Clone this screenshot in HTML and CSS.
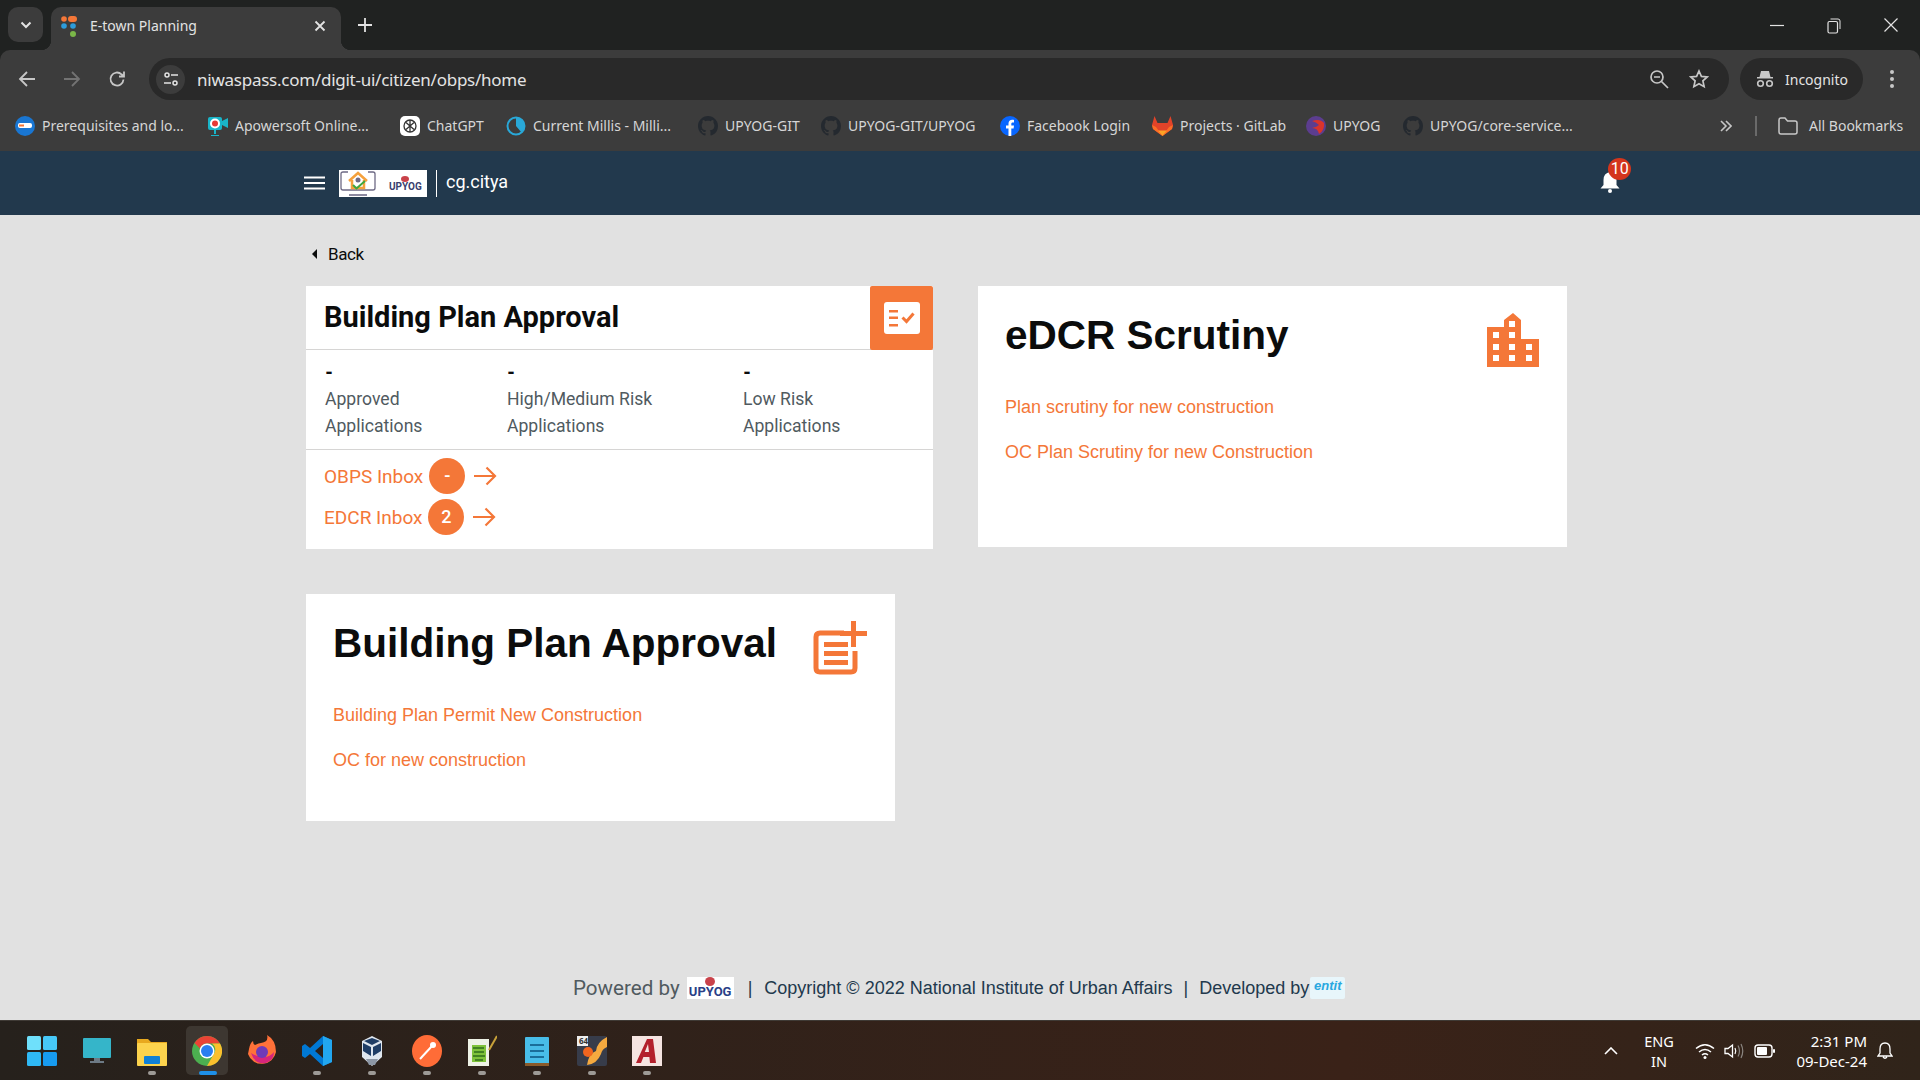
FILE: index.html
```html
<!DOCTYPE html>
<html lang="en">
<head>
    <meta charset="UTF-8">
    <title>E-town Planning</title>
    <link rel="stylesheet" href="styles.css">
</head>
<body>
    <svg class="defs" width="0" height="0">
        <symbol id="github" viewBox="0 0 16 16"><path fill="#24292f" d="M8 0C3.58 0 0 3.58 0 8c0 3.54 2.29 6.53 5.47 7.59.4.07.55-.17.55-.38 0-.19-.01-.82-.01-1.49-2.01.37-2.53-.49-2.69-.94-.09-.23-.48-.94-.82-1.13-.28-.15-.68-.52-.01-.53.63-.01 1.08.58 1.23.82.72 1.21 1.87.87 2.33.66.07-.52.28-.87.51-1.07-1.78-.2-3.64-.89-3.64-3.95 0-.87.31-1.59.82-2.15-.08-.2-.36-1.02.08-2.12 0 0 .67-.21 2.2.82.64-.18 1.32-.27 2-.27.68 0 1.36.09 2 .27 1.53-1.04 2.2-.82 2.2-.82.44 1.1.16 1.92.08 2.12.51.56.82 1.27.82 2.15 0 3.07-1.87 3.75-3.65 3.95.29.25.54.73.54 1.48 0 1.07-.01 1.93-.01 2.2 0 .21.15.46.55.38A8.013 8.013 0 0016 8c0-4.42-3.58-8-8-8z"/></symbol>
        <symbol id="arrow" viewBox="0 0 24 20"><path fill="none" stroke="#f47738" stroke-width="2.2" d="M1 10h21M13.5 1.5 22 10l-8.500 8.500"/></symbol>
    </svg>

    <!-- browser window -->
    <div class="tabstrip">
        <div class="tabsearch"><svg width="14" height="14" viewBox="0 0 14 14"><path fill="none" stroke="#e3e3e3" stroke-width="2" d="M2.500 4.500 7 9l4.500-4.500"/></svg></div>
        <div class="tab">
            <svg class="favicon" width="18" height="24" viewBox="0 0 18 24">
                <circle cx="3" cy="5" r="2.800" fill="#f47738"/><rect x="7" y="2" width="9" height="6" rx="3" fill="#f47738"/>
                <circle cx="3" cy="12" r="2.800" fill="#2d9cdb"/><circle cx="12" cy="12" r="2.800" fill="#2d9cdb"/>
                <circle cx="12" cy="20" r="3" fill="#7ab648"/>
            </svg>
            <span class="tab-title">E-town Planning</span>
            <svg width="12" height="12" viewBox="0 0 12 12"><path stroke="#e3e3e3" stroke-width="1.800" d="M1.500 1.500l9 9M10.500 1.500l-9 9"/></svg>
        </div>
        <svg class="newtab" width="14" height="14" viewBox="0 0 14 14"><path stroke="#e3e3e3" stroke-width="1.800" d="M7 0v14M0 7h14"/></svg>
        <div class="winctrls">
            <svg width="14" height="14" viewBox="0 0 14 14"><path stroke="#e3e3e3" stroke-width="1.200" d="M0 7.500h14"/></svg>
            <svg width="14" height="16" viewBox="0 0 14 16"><rect x="1" y="3.500" width="9.500" height="11.500" rx="1.500" fill="none" stroke="#e3e3e3" stroke-width="1.200"/><path fill="none" stroke="#e3e3e3" d="M3.500 1h7.500q2 0 2 2v8"/></svg>
            <svg width="14" height="14" viewBox="0 0 14 14"><path stroke="#e3e3e3" stroke-width="1.200" d="M.500.500l13 13M13.500.500l-13 13"/></svg>
        </div>
    </div>

    <div class="toolbar">
        <div class="navbtns">
            <svg width="18" height="18" viewBox="0 0 18 18"><path fill="none" stroke="#c7c7c7" stroke-width="1.800" d="M17 9H2M9 2 2 9l7 7"/></svg>
            <svg width="18" height="18" viewBox="0 0 18 18"><path fill="none" stroke="#737373" stroke-width="1.800" d="M1 9h15M9 2l7 7-7 7"/></svg>
            <svg width="18" height="18" viewBox="0 0 18 18"><path fill="none" stroke="#c7c7c7" stroke-width="1.800" d="M15.500 9.500A6.500 6.500 0 1 1 13.500 4.300L16 6.500M16 1.500v5h-5"/></svg>
        </div>
        <div class="omnibox">
            <div class="siteinfo"><svg width="16" height="16" viewBox="0 0 16 16"><g fill="none" stroke="#e3e3e3" stroke-width="1.500"><circle cx="4" cy="4" r="2"/><path d="M8 4h7M1 12h7"/><circle cx="12" cy="12" r="2"/></g></svg></div>
            <span class="url">niwaspass.com/digit-ui/citizen/obps/home</span>
            <svg width="20" height="20" viewBox="0 0 20 20"><g fill="none" stroke="#c7c7c7" stroke-width="1.700"><circle cx="8" cy="8" r="6"/><path d="M5 8h6M12.500 12.500 19 19"/></g></svg>
            <svg class="star" width="20" height="20" viewBox="0 0 20 20"><path fill="none" stroke="#c7c7c7" stroke-width="1.700" d="M10 2l2.400 5.400 5.800.6-4.300 3.900 1.200 5.800L10 14.800l-5.100 2.900 1.200-5.800L1.800 8l5.800-.6z"/></svg>
        </div>
        <div class="incognito">
            <svg width="18" height="18" viewBox="0 0 18 18"><path fill="#c7c7c7" d="M5 1h8l1.500 6H17v1.500H1V7h2.500z"/><g fill="none" stroke="#c7c7c7" stroke-width="1.600"><circle cx="4.500" cy="13.500" r="2.800"/><circle cx="13.500" cy="13.500" r="2.800"/></g></svg>
            <span>Incognito</span>
        </div>
        <svg class="menu" width="4" height="18" viewBox="0 0 4 18"><g fill="#c7c7c7"><circle cx="2" cy="2" r="2"/><circle cx="2" cy="9" r="2"/><circle cx="2" cy="16" r="2"/></g></svg>
    </div>

    <div class="bookmarks">
        <div class="bookmark"><svg width="20" height="20" viewBox="0 0 20 20"><circle cx="10" cy="10" r="10" fill="#1976d2"/><rect x="3" y="7" width="14" height="5" rx="2" fill="#fff"/><rect x="4" y="8.500" width="5" height="2" fill="#f47738"/></svg><span>Prerequisites and lo...</span></div>
        <div class="bookmark"><svg width="20" height="22" viewBox="0 0 20 22"><rect x="0" y="2" width="14" height="13" rx="2" fill="#19b5c9"/><path fill="#19b5c9" d="M14 6l6-3v10l-6-3zM6 15h2v4H6zM3 20h8v1H3z"/><circle cx="7" cy="8.500" r="5" fill="#fff"/><circle cx="7" cy="8.500" r="3" fill="#e53935"/></svg><span>Apowersoft Online...</span></div>
        <div class="bookmark"><svg width="20" height="20" viewBox="0 0 20 20"><rect width="20" height="20" rx="5" fill="#fff"/><g fill="none" stroke="#333" stroke-width="1.300"><circle cx="10" cy="10" r="6"/><path d="M6 6.500l8 7M14 6.500l-8 7M10 4v12"/></g></svg><span>ChatGPT</span></div>
        <div class="bookmark"><svg width="20" height="20" viewBox="0 0 20 20"><circle cx="10" cy="10" r="8.500" fill="none" stroke="#29a8d8" stroke-width="2"/><path fill="#29a8d8" d="M10 1.500A8.500 8.500 0 0 1 15.500 16.500L10 10z"/></svg><span>Current Millis - Milli...</span></div>
        <div class="bookmark"><svg width="20" height="20"><use href="#github"/></svg><span>UPYOG-GIT</span></div>
        <div class="bookmark"><svg width="20" height="20"><use href="#github"/></svg><span>UPYOG-GIT/UPYOG</span></div>
        <div class="bookmark"><svg width="20" height="20" viewBox="0 0 20 20"><circle cx="10" cy="10" r="10" fill="#0866ff"/><path fill="#fff" d="M8.500 20v-7.500H6V9.500h2.500V7.500C8.500 5 10 3.700 12.200 3.700c1 0 1.800.2 1.800.2v2.500h-1.200c-1.200 0-1.500.7-1.500 1.500v1.600h2.700l-.4 3h-2.300V20z"/></svg><span>Facebook Login</span></div>
        <div class="bookmark"><svg width="21" height="20" viewBox="0 0 21 20"><path fill="#e24329" d="M10.500 20 1 13 0 9 2.500 0l3 7h10l3-7L21 9l-1 4z"/><path fill="#fc6d26" d="M10.500 20 4 11l-4-2 1 4zM10.500 20 17 11l4-2-1 4z"/><path fill="#fca326" d="M10.500 20 6 14.500h9z"/></svg><span>Projects · GitLab</span></div>
        <div class="bookmark"><svg width="20" height="20" viewBox="0 0 20 20"><circle cx="10" cy="10" r="10" fill="#5c3d8f"/><path fill="#d9342b" d="M6 5q8-3 12 2 1 7-5 11-1-6-7-6 5-1 7-3-3-3-7-4z"/></svg><span>UPYOG</span></div>
        <div class="bookmark"><svg width="20" height="20"><use href="#github"/></svg><span>UPYOG/core-service...</span></div>
        <svg class="more" width="12" height="12" viewBox="0 0 12 12"><path fill="none" stroke="#c7c7c7" stroke-width="1.600" d="M1 1l5 5-5 5M6 1l5 5-5 5"/></svg>
        <div class="bm-sep"></div>
        <div class="bookmark allbm"><svg width="20" height="18" viewBox="0 0 20 18"><path fill="none" stroke="#c7c7c7" stroke-width="1.500" d="M1 3q0-2 2-2h4l2.500 3H17q2 0 2 2v9q0 2-2 2H3q-2 0-2-2z"/></svg><span>All Bookmarks</span></div>
    </div>

    <!-- site header -->
    <header class="topbar">
        <svg class="hamburger" width="21" height="14" viewBox="0 0 21 14"><path stroke="#fff" stroke-width="2.200" d="M0 1.500h21M0 7h21M0 12.500h21"/></svg>
        <div class="logo">
            <svg width="36" height="27" viewBox="0 0 36 27">
                <path fill="none" stroke="#6e6a85" stroke-width="1.300" d="M8 2H3Q1 2 1 4v14q0 2 2 2h30q2 0 2-2V4q0-2-2-2h-5"/>
                <path fill="none" stroke="#f5a13c" stroke-width="2.500" d="M9 11l9-8 9 8M12 10v8h12v-8"/>
                <circle cx="18" cy="10" r="2.500" fill="#6e6a85"/>
                <path fill="none" stroke="#3fa63f" stroke-width="2" d="M13 15l3.500 3.500L25 11"/>
                <rect x="9" y="24" width="18" height="2" fill="#8d8aa0"/>
            </svg>
            <div class="logo-upyog">
                <i class="logo-dot"></i>
                <span>UPYOG</span>
            </div>
        </div>
        <span class="city">cg.citya</span>
        <div class="notif">
            <svg width="20" height="21" viewBox="0 0 20 21"><path fill="#fff" d="M10 0q6.500 1 6.500 8v5l3 3.500H.5l3-3.500V8Q3.500 1 10 0z"/><circle cx="10" cy="19" r="2" fill="#fff"/></svg>
            <span class="badge">10</span>
        </div>
    </header>

    <main class="page">
        <div class="back"><i class="caret"></i><span>Back</span></div>

        <div class="cards">
            <section class="card card-inbox">
                <div class="inbox-head">
                    <h2>Building Plan Approval</h2>
                    <div class="head-icon">
                        <svg width="36" height="32" viewBox="0 0 36 32">
                            <rect width="36" height="32" rx="3" fill="#fff"/>
                            <path fill="#f47738" d="M5 8h9v2.500H5zM5 14.500h9v2.500H5zM5 22h9v2.500H5z"/>
                            <path fill="none" stroke="#f47738" stroke-width="3" d="M18.500 15.500l4 4 7-8"/>
                        </svg>
                    </div>
                </div>
                <div class="stats">
                    <div class="stat"><b>-</b><p>Approved<br>Applications</p></div>
                    <div class="stat"><b>-</b><p>High/Medium Risk<br>Applications</p></div>
                    <div class="stat"><b>-</b><p>Low Risk<br>Applications</p></div>
                </div>
                <div class="inbox-links">
                    <div class="inbox-link"><a>OBPS Inbox</a><span class="count">-</span><svg width="24" height="20"><use href="#arrow"/></svg></div>
                    <div class="inbox-link"><a>EDCR Inbox</a><span class="count">2</span><svg width="24" height="20"><use href="#arrow"/></svg></div>
                </div>
            </section>

            <section class="card card-link">
                <div class="link-head">
                    <h1>eDCR Scrutiny</h1>
                    <svg width="52" height="54" viewBox="0 0 52 54">
                        <path fill="#f47738" d="M0 14h17V7l9-7 8 7v19h18v28H0z"/>
                        <g fill="#fff">
                            <rect x="22" y="8" width="6" height="6"/>
                            <rect x="6" y="19" width="6" height="6"/><rect x="22" y="19" width="6" height="6"/>
                            <rect x="6" y="31" width="6" height="6"/><rect x="22" y="31" width="6" height="6"/><rect x="39" y="31" width="6" height="6"/>
                            <rect x="6" y="42" width="6" height="6"/><rect x="22" y="42" width="6" height="6"/><rect x="39" y="42" width="6" height="6"/>
                        </g>
                    </svg>
                </div>
                <a class="card-a first">Plan scrutiny for new construction</a>
                <a class="card-a">OC Plan Scrutiny for new Construction</a>
            </section>

            <section class="card card-link card-short">
                <div class="link-head">
                    <h1>Building Plan Approval</h1>
                    <svg width="54" height="54" viewBox="0 0 54 54">
                        <path fill="none" stroke="#f47738" stroke-width="5" d="M31 12H7q-4 0-4 4v31q0 4 4 4h31q4 0 4-4V30"/>
                        <path fill="#f47738" d="M11 21h24v5H11zM11 30h24v5H11zM11 39h24v5H11zM38 0h5v10h11v5H43v11h-5V15H27v-5h11z"/>
                    </svg>
                </div>
                <a class="card-a first">Building Plan Permit New Construction</a>
                <a class="card-a">OC for new construction</a>
            </section>
        </div>

        <footer class="footer">
            <span class="powered">Powered by</span>
            <div class="foot-upyog"><i class="logo-dot"></i><span>UPYOG</span></div>
            <span class="foot-bar foot-bar-first">|</span>
            <span>Copyright © 2022 National Institute of Urban Affairs</span>
            <span class="foot-bar">|</span>
            <span>Developed by</span>
            <div class="foot-entit"><span>entit</span></div>
        </footer>
    </main>

    <!-- windows taskbar -->
    <div class="taskbar">
        <div class="apps">
            <div class="app"><svg width="30" height="30" viewBox="0 0 30 30"><g fill="#2fb9f5"><rect width="14" height="14" rx="1.500" fill="#6fe0fb"/><rect x="16" width="14" height="14" rx="1.500" fill="#47c9f8"/><rect y="16" width="14" height="14" rx="1.500" fill="#2fb9f5"/><rect x="16" y="16" width="14" height="14" rx="1.500" fill="#179bf0"/></g></svg></div>
            <div class="app"><svg width="30" height="30" viewBox="0 0 30 30"><rect x="1" y="2" width="28" height="20" rx="1" fill="#35b5c9"/><path fill="#6d7a85" d="M12 22h6v3h-6zM8 25h14v2H8z"/></svg></div>
            <div class="app run"><svg width="30" height="30" viewBox="0 0 30 30"><path fill="#e8a91f" d="M0 3h11l3 3h16v5H0z"/><rect y="7" width="30" height="23" rx="1" fill="#fcd34d"/><rect x="7" y="20" width="16" height="8" rx="1" fill="#0f80d6"/></svg></div>
            <div class="app active"><svg width="30" height="30" viewBox="0 0 30 30"><circle cx="15" cy="15" r="15" fill="#4caf50"/><path fill="#ea4335" d="M15 0a15 15 0 0 1 13 7.500H15a7.500 7.500 0 0 0-7 5L2.500 7A15 15 0 0 1 15 0z"/><path fill="#fbc02d" d="M28 7.500A15 15 0 0 1 15 30l6.500-11.500A7.500 7.500 0 0 0 20 7.500z"/><circle cx="15" cy="15" r="7.500" fill="#fff"/><circle cx="15" cy="15" r="6" fill="#2a7ef0"/></svg></div>
            <div class="app"><svg width="30" height="32" viewBox="0 0 30 32"><path fill="#ff7139" d="M2 14Q3 8 6 6q0 3 2 4 4-2 6-2 8-1 6-8 9 5 9 17a14.500 14.500 0 0 1-28 2z"/><path fill="#d6257d" d="M4 18q4 12 15 10 8-3 8-11-4 5-10 5-7 0-13-4z"/><circle cx="15" cy="17" r="6" fill="#6f3ab8"/></svg></div>
            <div class="app run"><svg width="30" height="30" viewBox="0 0 30 30"><path fill="#0078d4" d="M21 0l9 4v22l-9 4L8 18l-5 4-3-2v-10l3-2 5 4zM21 8l-8 7 8 7z"/><path fill="#22a7f0" d="M21 0l9 4v22l-9 4z"/></svg></div>
            <div class="app run"><svg width="30" height="32" viewBox="0 0 30 32"><path fill="#dfe6ef" d="M5 6 15 1l10 5v16l-10 9-10-9z"/><path fill="#1f3d66" d="M7 6l8-3 8 3-8 4zM6 8l8 4v9l-8-5zM16 12l8-4v8l-8 5z"/><path fill="#8d97a5" d="M9 24h12l-3 6h-6z"/></svg></div>
            <div class="app run"><svg width="30" height="32" viewBox="0 0 30 32"><ellipse cx="15" cy="16" rx="15" ry="16" fill="#ff6c37"/><path fill="none" stroke="#fff" stroke-width="2" d="M8 24 20 11"/><circle cx="21" cy="10" r="3" fill="#fff"/></svg></div>
            <div class="app run"><svg width="30" height="32" viewBox="0 0 30 32"><path fill="#eef2e6" d="M1 4h21v27H1z"/><rect x="5" y="10" width="14" height="17" fill="#7ec23a"/><path stroke="#2f6d1b" stroke-width="1.500" d="M6 13h11M7 17h10M6 21h12M8 25h8"/><path stroke="#c8a13a" stroke-width="2" d="M22 15 30 1"/></svg></div>
            <div class="app run"><svg width="30" height="32" viewBox="0 0 30 32"><rect x="3" y="2" width="24" height="29" rx="1" fill="#48bde8"/><rect x="3" y="28" width="24" height="3" fill="#8a5a2b"/><path stroke="#1a6e99" stroke-width="2" d="M8 10h14M8 16h14M8 22h14"/></svg></div>
            <div class="app run"><svg width="30" height="32" viewBox="0 0 30 32"><rect y="1" width="30" height="30" rx="2" fill="#373c4a"/><path fill="#f5a93f" d="M10 30q2-12 9-14 1-9 11-14v10q-5 2-6 7-4 10-14 11z"/><circle cx="11" cy="17" r="5" fill="#f0651f"/><rect y="1" width="11" height="10" fill="#eee"/><text class="app64" x="2" y="9">64</text></svg></div>
            <div class="app run"><svg width="30" height="30" viewBox="0 0 30 30"><rect width="30" height="30" fill="#f5e4e1"/><path fill="#b3202c" d="M15 3h6l3 24h-6l-.6-6h-6L9 27H4zM12.800 16h4.200L16 8z"/></svg></div>
        </div>
        <div class="tray">
            <svg class="tray-up" width="14" height="8" viewBox="0 0 14 8"><path fill="none" stroke="#fff" stroke-width="1.600" d="M1 7l6-6 6 6"/></svg>
            <div class="lang"><span>ENG</span><span>IN</span></div>
            <svg class="wifi" width="20" height="16" viewBox="0 0 20 16"><g fill="none" stroke="#fff" stroke-width="1.500"><path d="M1 5.500q9-7.500 18 0M4 9q6-5 12 0M7 12q3-2.500 6 0"/></g><circle cx="10" cy="14.500" r="1.500" fill="#fff"/></svg>
            <svg class="volume" width="20" height="16" viewBox="0 0 20 16"><path fill="none" stroke="#fff" stroke-width="1.300" d="M1 5.500h3L8.500 2v12L4 10.500H1z"/><path fill="none" stroke="#fff" stroke-width="1.200" d="M11 5q1.500 3 0 6"/><path fill="none" stroke="#8a8580" stroke-width="1.200" d="M14 2.500q3 5.500 0 11M17 1q3.500 7 0 14"/></svg>
            <svg class="battery" width="21" height="14" viewBox="0 0 21 14"><rect x="1" y="1" width="17" height="12" rx="3" fill="none" stroke="#fff" stroke-width="1.400"/><rect x="3" y="3" width="10" height="8" rx="1" fill="#fff"/><rect x="19" y="5" width="2" height="4" rx="1" fill="#fff"/></svg>
            <div class="clock"><span>2:31 PM</span><span>09-Dec-24</span></div>
            <svg class="tray-bell" width="16" height="18" viewBox="0 0 16 18"><path fill="none" stroke="#fff" stroke-width="1.300" d="M8 1q5 0 5 6v4l2 3H1l2-3V7q0-6 5-6zM6 15q2 2.500 4 0"/></svg>
        </div>
    </div>
</body>
</html>
```

FILE: styles.css
```css
* {
    box-sizing: border-box;
}

body {
    margin: 0;
    height: 100vh;
    display: flex;
    flex-direction: column;
    overflow: hidden;
    font-family: Roboto, Arial, sans-serif;
    background-color: #202221;
}

h1, h2, p {
    margin: 0;
}

svg {
    display: block;
    flex-shrink: 0;
}

.defs {
    position: absolute;
}

/* browser tabs */
.tabstrip {
    height: 50px;
    flex-shrink: 0;
    display: flex;
    align-items: flex-start;
    padding: 7px 0 0 8px;
    background-color: #202221;
}

.tabsearch {
    width: 35px;
    height: 35px;
    margin-right: 8px;
    display: flex;
    align-items: center;
    justify-content: center;
    background-color: #3c3c3c;
    border-radius: 10px;
}

.tab {
    position: relative;
    width: 290px;
    height: 43px;
    display: flex;
    align-items: center;
    padding: 0 15px 6px 10px;
    background-color: #3c3c3c;
    border-radius: 10px 10px 0 0;
    color: #e3e3e3;
    font-family: "Noto Sans", sans-serif;
    font-size: 14px;
}

/* the little flares at the foot of the active tab */
.tab::before, .tab::after {
    content: "";
    position: absolute;
    bottom: 0;
    width: 10px;
    height: 10px;
}

.tab::before {
    left: -10px;
    background: radial-gradient(circle at 0 0, transparent 10px, #3c3c3c 10.5px);
}

.tab::after {
    right: -10px;
    background: radial-gradient(circle at 100% 0, transparent 10px, #3c3c3c 10.5px);
}

.favicon {
    margin-right: 11px;
}

.tab-title {
    flex: 1;
}

.newtab {
    margin: 11px 0 0 17px;
}

.winctrls {
    margin-left: auto;
    margin-top: 11px;
    margin-right: 22px;
    display: flex;
    gap: 43px;
}

/* address bar */
.toolbar {
    height: 50px;
    flex-shrink: 0;
    display: flex;
    align-items: flex-start;
    padding: 8px 0 0 18px;
    background-color: #3c3c3c;
    border-radius: 10px 10px 0 0;
}

.navbtns {
    display: flex;
    gap: 27px;
    padding-top: 12px;
    margin-right: 23px;
}

.omnibox {
    width: 1580px;
    height: 42px;
    display: flex;
    align-items: center;
    padding: 0 20px 0 7px;
    background-color: #292929;
    border-radius: 21px;
}

.siteinfo {
    width: 29px;
    height: 29px;
    display: flex;
    align-items: center;
    justify-content: center;
    background-color: #3c3c3c;
    border-radius: 50%;
    margin-right: 12px;
}

.url {
    flex: 1;
    color: #e3e3e3;
    font-family: "Noto Sans", sans-serif;
    font-size: 17px;
    letter-spacing: -0.25px;
}

.star {
    margin-left: 20px;
}

.incognito {
    width: 123px;
    height: 42px;
    margin-left: 11px;
    display: flex;
    align-items: center;
    gap: 11px;
    padding-left: 16px;
    background-color: #292929;
    border-radius: 21px;
    color: #e3e3e3;
    font-family: "Noto Sans", sans-serif;
    font-size: 14px;
}

.menu {
    margin: 12px 0 0 27px;
}

/* bookmarks bar */
.bookmarks {
    height: 51px;
    flex-shrink: 0;
    display: grid;
    grid-template-columns: 193px 192px 106px 192px 123px 179px 152px 154px 97px 317px 35px 23px auto;
    align-items: center;
    padding-left: 15px;
    background-color: #3c3c3c;
    color: #d6d6d6;
    font-family: "Noto Sans", sans-serif;
    font-size: 14px;
}

.bookmark {
    display: flex;
    align-items: center;
    gap: 7px;
    white-space: nowrap;
}

.allbm {
    gap: 11px;
}

.bm-sep {
    width: 2px;
    height: 20px;
    background-color: #6a6a6a;
}

/* site header */
.topbar {
    height: 64px;
    flex-shrink: 0;
    display: flex;
    align-items: center;
    padding-left: 304px;
    background-color: #22394d;
}

.hamburger {
    margin-right: 14px;
}

.logo {
    width: 88px;
    height: 27px;
    display: flex;
    align-items: center;
    gap: 13px;
    padding-left: 1px;
    background-color: #fff;
}

.logo-upyog {
    display: flex;
    flex-direction: column;
    align-items: center;
    color: #39406e;
    font-size: 10px;
    font-weight: 700;
    line-height: 9px;
}

.logo-dot {
    width: 8px;
    height: 6px;
    border-radius: 50%;
    background-color: #c9424a;
}

.city {
    height: 27px;
    margin-left: 9px;
    padding-left: 9px;
    border-left: 1px solid #fff;
    color: #fff;
    font-size: 18px;
    line-height: 23px;
}

.notif {
    position: relative;
    margin-left: 1092px;
    margin-top: -1px;
}

.badge {
    position: absolute;
    top: -14px;
    left: 8px;
    width: 23px;
    height: 22px;
    border-radius: 50%;
    background-color: #d4351c;
    color: #fff;
    font-size: 16px;
    line-height: 22px;
    text-align: center;
}

/* page */
.page {
    flex: 1;
    display: flex;
    flex-direction: column;
    padding-left: 306px;
    background-color: #e1e1e1;
}

.back {
    display: flex;
    align-items: center;
    height: 24px;
    margin: 27px 0 20px 6px;
    gap: 11px;
    color: #0b0c0c;
    font-size: 17px;
}

.back span {
    letter-spacing: -0.4px;
}

.caret {
    width: 0;
    height: 0;
    border-top: 5px solid transparent;
    border-bottom: 5px solid transparent;
    border-right: 5px solid #0b0c0c;
}

.cards {
    display: grid;
    grid-template-columns: 627px 589px;
    gap: 45px;
    align-items: start;
}

.card {
    background-color: #fff;
}

.card-inbox {
    height: 263px;
}

.inbox-head {
    height: 64px;
    display: flex;
    justify-content: space-between;
    padding-left: 18px;
    border-bottom: 1px solid #d6d5d4;
}

.inbox-head h2 {
    font-size: 29px;
    font-weight: 700;
    line-height: 62px;
    color: #0b0c0c;
}

.head-icon {
    width: 63px;
    height: 64px;
    padding: 16px 0 0 14px;
    background-color: #f47738;
    border-radius: 2px;
}

.stats {
    height: 100px;
    display: grid;
    grid-template-columns: 182px 236px 1fr;
    padding: 11px 0 0 19px;
    border-bottom: 1px solid #d6d5d4;
}

.stat b {
    display: block;
    height: 25px;
    font-size: 18px;
    font-weight: 900;
    line-height: 24px;
    color: #0b0c0c;
}

.stat p {
    color: #505a5f;
    font-size: 17.600px;
    line-height: 27px;
}

.inbox-links {
    display: flex;
    flex-direction: column;
    gap: 5px;
    padding: 8px 0 0 18px;
}

.inbox-link {
    display: flex;
    align-items: center;
    color: #f47738;
    font-size: 19px;
}

.inbox-link svg {
    margin-left: 8px;
}

.count {
    width: 36px;
    height: 36px;
    margin-left: 6px;
    border-radius: 50%;
    background-color: #f47738;
    color: #fff;
    font-size: 18px;
    font-weight: 500;
    line-height: 36px;
    text-align: center;
}

.card-link {
    height: 261px;
    padding: 26px 28px 0 27px;
    font-family: "Liberation Sans", Arial, sans-serif;
}

.card-short {
    width: 589px;
    height: 227px;
}

.link-head {
    height: 46px;
    display: flex;
    justify-content: space-between;
    margin-bottom: 37px;
}

.link-head h1 {
    font-size: 40.500px;
    font-weight: 700;
    line-height: 46px;
    color: #0b0c0c;
}

.link-head svg {
    margin-top: 1px;
}

.card-a {
    display: block;
    margin-top: 21px;
    color: #f47738;
    font-size: 18px;
    line-height: 24px;
}

.card-a.first {
    margin-top: 0;
}

/* footer */
.footer {
    margin-top: auto;
    margin-bottom: 20px;
    margin-left: 267px;
    height: 24px;
    display: flex;
    align-items: center;
    color: #22394d;
    font-family: "Liberation Sans", Arial, sans-serif;
    font-size: 18px;
    white-space: nowrap;
}

.powered {
    color: #505a5f;
    font-family: Roboto, sans-serif;
    font-size: 20.600px;
}

.foot-upyog {
    width: 47px;
    height: 22px;
    margin-left: 7px;
    display: flex;
    flex-direction: column;
    align-items: center;
    background-color: #fff;
    color: #2a3f87;
    font-family: Roboto, sans-serif;
    font-size: 13px;
    font-weight: 700;
    line-height: 12px;
}

.foot-upyog .logo-dot {
    width: 10px;
    height: 9px;
    background-color: #c9424a;
}

.foot-bar {
    margin: 0 11px;
}

.foot-bar-first {
    margin: 0 12px 0 14px;
}

.foot-entit {
    width: 35px;
    height: 22px;
    margin-left: 1px;
    border-radius: 2px;
    background-color: #e8f6fb;
    color: #29a8e0;
    font-size: 13px;
    font-style: italic;
    font-weight: 700;
    line-height: 18px;
    text-align: center;
}

/* taskbar */
.taskbar {
    height: 60px;
    flex-shrink: 0;
    display: flex;
    align-items: center;
    background: linear-gradient(90deg, #26211c, #3a2218 70%, #30241a);
    border-top: 1px solid #3f3a35;
    color: #fff;
    font-family: "Noto Sans", sans-serif;
}

.apps {
    display: flex;
    gap: 13px;
    padding-left: 21px;
}

.app {
    position: relative;
    width: 42px;
    height: 49px;
    display: flex;
    align-items: center;
    justify-content: center;
    border-radius: 5px;
}

.app.run::after, .app.active::after {
    content: "";
    position: absolute;
    bottom: 0;
    left: 17px;
    width: 8px;
    height: 4px;
    border-radius: 2px;
    background-color: #9d9a96;
}

.app.active {
    background-color: #3d3731;
}

.app.active::after {
    left: 13px;
    width: 18px;
    background-color: #1e90e8;
}

.app64 {
    font-size: 8px;
    font-weight: 700;
    fill: #333;
}

.tray {
    margin-left: auto;
    display: flex;
    align-items: center;
    padding-right: 27px;
    font-size: 15px;
}

.tray-up {
    margin-right: 23px;
}

.lang {
    width: 36px;
    display: flex;
    flex-direction: column;
    align-items: center;
    font-size: 14.500px;
    line-height: 20px;
    margin-right: 18px;
}

.wifi {
    margin-right: 9px;
}

.volume {
    margin-right: 10px;
}

.clock {
    width: 92px;
    display: flex;
    flex-direction: column;
    align-items: flex-end;
    line-height: 20px;
    margin-right: 10px;
}
```
